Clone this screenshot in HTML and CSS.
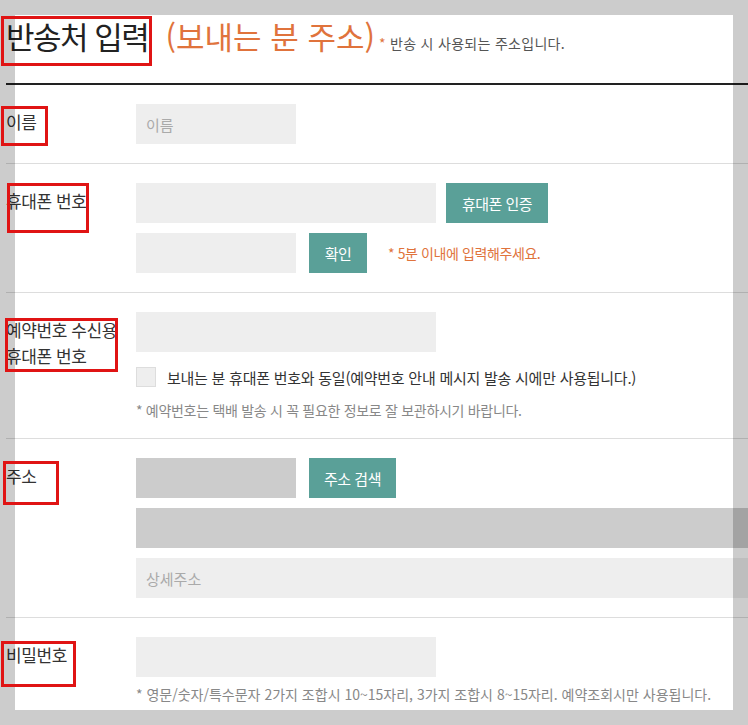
FILE: index.html
```html
<!DOCTYPE html>
<html lang="ko">
<head>
<meta charset="utf-8">
<title>반송처 입력</title>
<link rel="stylesheet" href="styles.css">
</head>
<body>
<div class="page">
  <div class="header">
    <h1 class="title">반송처 입력 <span class="title-sub">(보내는 분 주소)</span><span class="title-note"><span class="star">*</span> 반송 시 사용되는 주소입니다.</span></h1>
  </div>

  <div class="row">
    <div class="label">이름</div>
    <div class="field">
      <input class="input w160" type="text" placeholder="이름">
    </div>
  </div>

  <div class="row">
    <div class="label">휴대폰 번호</div>
    <div class="field">
      <div class="line gap10">
        <input class="input w300" type="text">
        <button class="btn btn-auth" type="button">휴대폰 인증</button>
      </div>
      <div class="line">
        <input class="input w160" type="text">
        <button class="btn btn-ok" type="button">확인</button>
        <span class="warn"><span class="star">*</span> 5분 이내에 입력해주세요.</span>
      </div>
    </div>
  </div>

  <div class="row">
    <div class="label">예약번호 수신용<br>휴대폰 번호</div>
    <div class="field">
      <input class="input w300" type="text">
      <label class="check-line"><span class="checkbox"></span><span class="check-text">보내는 분 휴대폰 번호와 동일(예약번호 안내 메시지 발송 시에만 사용됩니다.)</span></label>
      <p class="note">* 예약번호는 택배 발송 시 꼭 필요한 정보로 잘 보관하시기 바랍니다.</p>
    </div>
  </div>

  <div class="row">
    <div class="label">주소</div>
    <div class="field">
      <div class="line">
        <input class="input w160 disabled" type="text" disabled>
        <button class="btn btn-search" type="button">주소 검색</button>
      </div>
      <input class="input full disabled" type="text" disabled>
      <input class="input full" type="text" placeholder="상세주소">
    </div>
  </div>

  <div class="row last">
    <div class="label">비밀번호</div>
    <div class="field">
      <input class="input w300" type="password">
      <p class="note note-pw">* 영문/숫자/특수문자 2가지 조합시 10~15자리, 3가지 조합시 8~15자리. 예약조회시만 사용됩니다.</p>
    </div>
  </div>
</div>

<div class="frame"></div>

<div class="mark mark-1"></div>
<div class="mark mark-2"></div>
<div class="mark mark-3"></div>
<div class="mark mark-4"></div>
<div class="mark mark-5"></div>
<div class="mark mark-6"></div>
</body>
</html>
```

FILE: styles.css
```css
* {
  box-sizing: border-box;
}

html, body {
  margin: 0;
  padding: 0;
  background: #ffffff;
  overflow: hidden;
}

body {
  font-family: "Noto Sans CJK KR", "Noto Sans", "Liberation Sans", sans-serif;
  color: #333333;
  width: 748px;
  height: 725px;
}

.page {
  margin-left: 6px;
  width: 742px;
}

.header {
  height: 85px;
  padding-top: 16px;
  border-bottom: 2px solid #222222;
}

.title {
  margin: 0;
  font-size: 31px;
  font-weight: 400;
  line-height: 40px;
  letter-spacing: -1.5px;
  color: #222222;
  white-space: nowrap;
}

.title-sub {
  color: #e0733c;
  margin-left: 10px;
  letter-spacing: 0;
}

.title-note {
  font-size: 14px;
  letter-spacing: 0.3px;
  color: #555555;
  margin-left: 4px;
}

.star {
  color: #e0733c;
}

.row {
  display: grid;
  grid-template-columns: 130px 1fr;
  padding: 19px 0;
  border-bottom: 1px solid #dddddd;
}

.row.last {
  border-bottom: 0;
}

.label {
  font-size: 17px;
  line-height: 26px;
  padding-top: 5px;
  letter-spacing: -0.4px;
  color: #333333;
  white-space: nowrap;
}

.field {
  display: flex;
  flex-direction: column;
  gap: 10px;
  min-width: 0;
}

.line {
  display: flex;
  align-items: center;
  gap: 13px;
}

.line.gap10 {
  gap: 10px;
}

.input {
  display: block;
  height: 40px;
  border: 0;
  margin: 0;
  background: #eeeeee;
  padding: 0 10px;
  font-family: inherit;
  font-size: 15px;
  color: #333333;
  outline: none;
}

.input::placeholder {
  color: #aaaaaa;
  opacity: 1;
}

.input.disabled {
  background: #cccccc;
}

.w160 {
  width: 160px;
}

.w300 {
  width: 300px;
}

.full {
  width: 100%;
}

.btn {
  height: 40px;
  border: 0;
  margin: 0;
  padding: 0;
  background: #5aa098;
  color: #ffffff;
  font-family: inherit;
  font-size: 15px;
  letter-spacing: -0.5px;
}

.btn-auth {
  width: 102px;
}

.btn-ok {
  width: 58px;
}

.btn-search {
  width: 87px;
}

.warn {
  margin-left: 8px;
  font-size: 14px;
  letter-spacing: -0.4px;
  color: #e0733c;
}

.check-line {
  display: flex;
  align-items: center;
  gap: 11px;
  margin-top: 5px;
  height: 20px;
}

.checkbox {
  width: 20px;
  height: 20px;
  background: #eeeeee;
  border: 1px solid #dddddd;
  flex: none;
}

.check-text {
  font-size: 15px;
  letter-spacing: -0.25px;
  color: #333333;
  white-space: nowrap;
}

.note {
  margin: 4px 0 0;
  font-size: 14px;
  line-height: 18px;
  letter-spacing: -0.3px;
  color: #888888;
  white-space: nowrap;
}

.note.note-pw {
  margin-top: -2px;
  letter-spacing: 0;
}

.frame {
  position: fixed;
  left: 0;
  top: 0;
  width: 748px;
  height: 725px;
  border: 15px solid rgba(0, 0, 0, 0.2);
  pointer-events: none;
  z-index: 10;
}

.mark {
  position: absolute;
  border: 3px solid #e01414;
  z-index: 20;
  pointer-events: none;
}

.mark-1 { left: 1px; top: 16px; width: 151px; height: 50px; }
.mark-2 { left: 1px; top: 106px; width: 47px; height: 40px; }
.mark-3 { left: 7px; top: 183px; width: 82px; height: 50px; }
.mark-4 { left: 5px; top: 318px; width: 113px; height: 54px; }
.mark-5 { left: 3px; top: 461px; width: 56px; height: 44px; }
.mark-6 { left: 1px; top: 641px; width: 75px; height: 46px; }
```
